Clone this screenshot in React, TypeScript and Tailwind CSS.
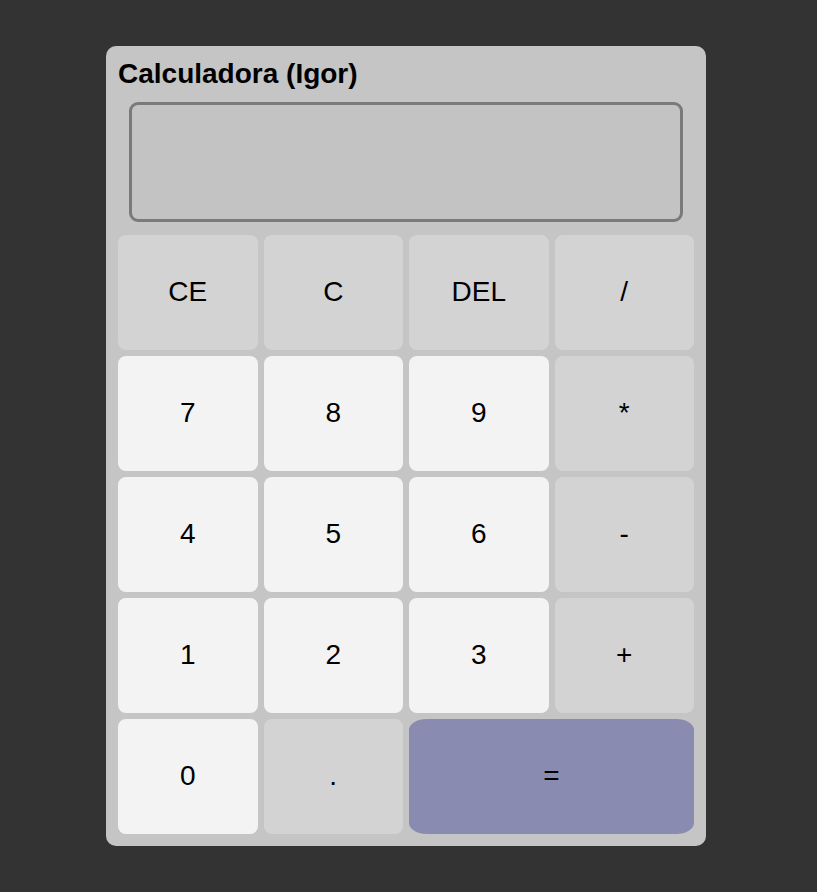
const keys: { label: string; tone: 'op' | 'num' | 'eq' }[] = [
  { label: 'CE', tone: 'op' },
  { label: 'C', tone: 'op' },
  { label: 'DEL', tone: 'op' },
  { label: '/', tone: 'op' },
  { label: '7', tone: 'num' },
  { label: '8', tone: 'num' },
  { label: '9', tone: 'num' },
  { label: '*', tone: 'op' },
  { label: '4', tone: 'num' },
  { label: '5', tone: 'num' },
  { label: '6', tone: 'num' },
  { label: '-', tone: 'op' },
  { label: '1', tone: 'num' },
  { label: '2', tone: 'num' },
  { label: '3', tone: 'num' },
  { label: '+', tone: 'op' },
  { label: '0', tone: 'num' },
  { label: '.', tone: 'op' },
  { label: '=', tone: 'eq' },
];

const App = () => {
  return (
    <div className="min-h-[892px] bg-[#333333] pt-[46px] pl-[106px] font-['Liberation_Sans',Arial,sans-serif]">
      <div className="w-[600px] h-[800px] bg-[#c5c5c5] rounded-[10px] p-3 flex flex-col">
        <h1 className="text-[28px] font-bold text-black leading-[32px]">Calculadora (Igor)</h1>
        <div className="mt-3 mx-[11px] h-[120px] border-[3px] border-[#7a7a7a] rounded-[9px] bg-[#c3c3c3]" />
        <div className="mt-[13px] grid grid-cols-4 grid-rows-5 gap-[6px] flex-1">
          {keys.map(k => (
            <button
              key={k.label}
              className={`text-[28px] text-black flex items-center justify-center pb-[1px] ${
                k.tone === 'num'
                  ? 'bg-[#f3f3f3] rounded-[8px]'
                  : k.tone === 'op'
                  ? 'bg-[#d4d3d4] rounded-[8px]'
                  : 'bg-[#898bb0] col-span-2 rounded-[18px/11px]'
              }`}
            >
              {k.label}
            </button>
          ))}
        </div>
      </div>
    </div>
  );
};

export default App;
